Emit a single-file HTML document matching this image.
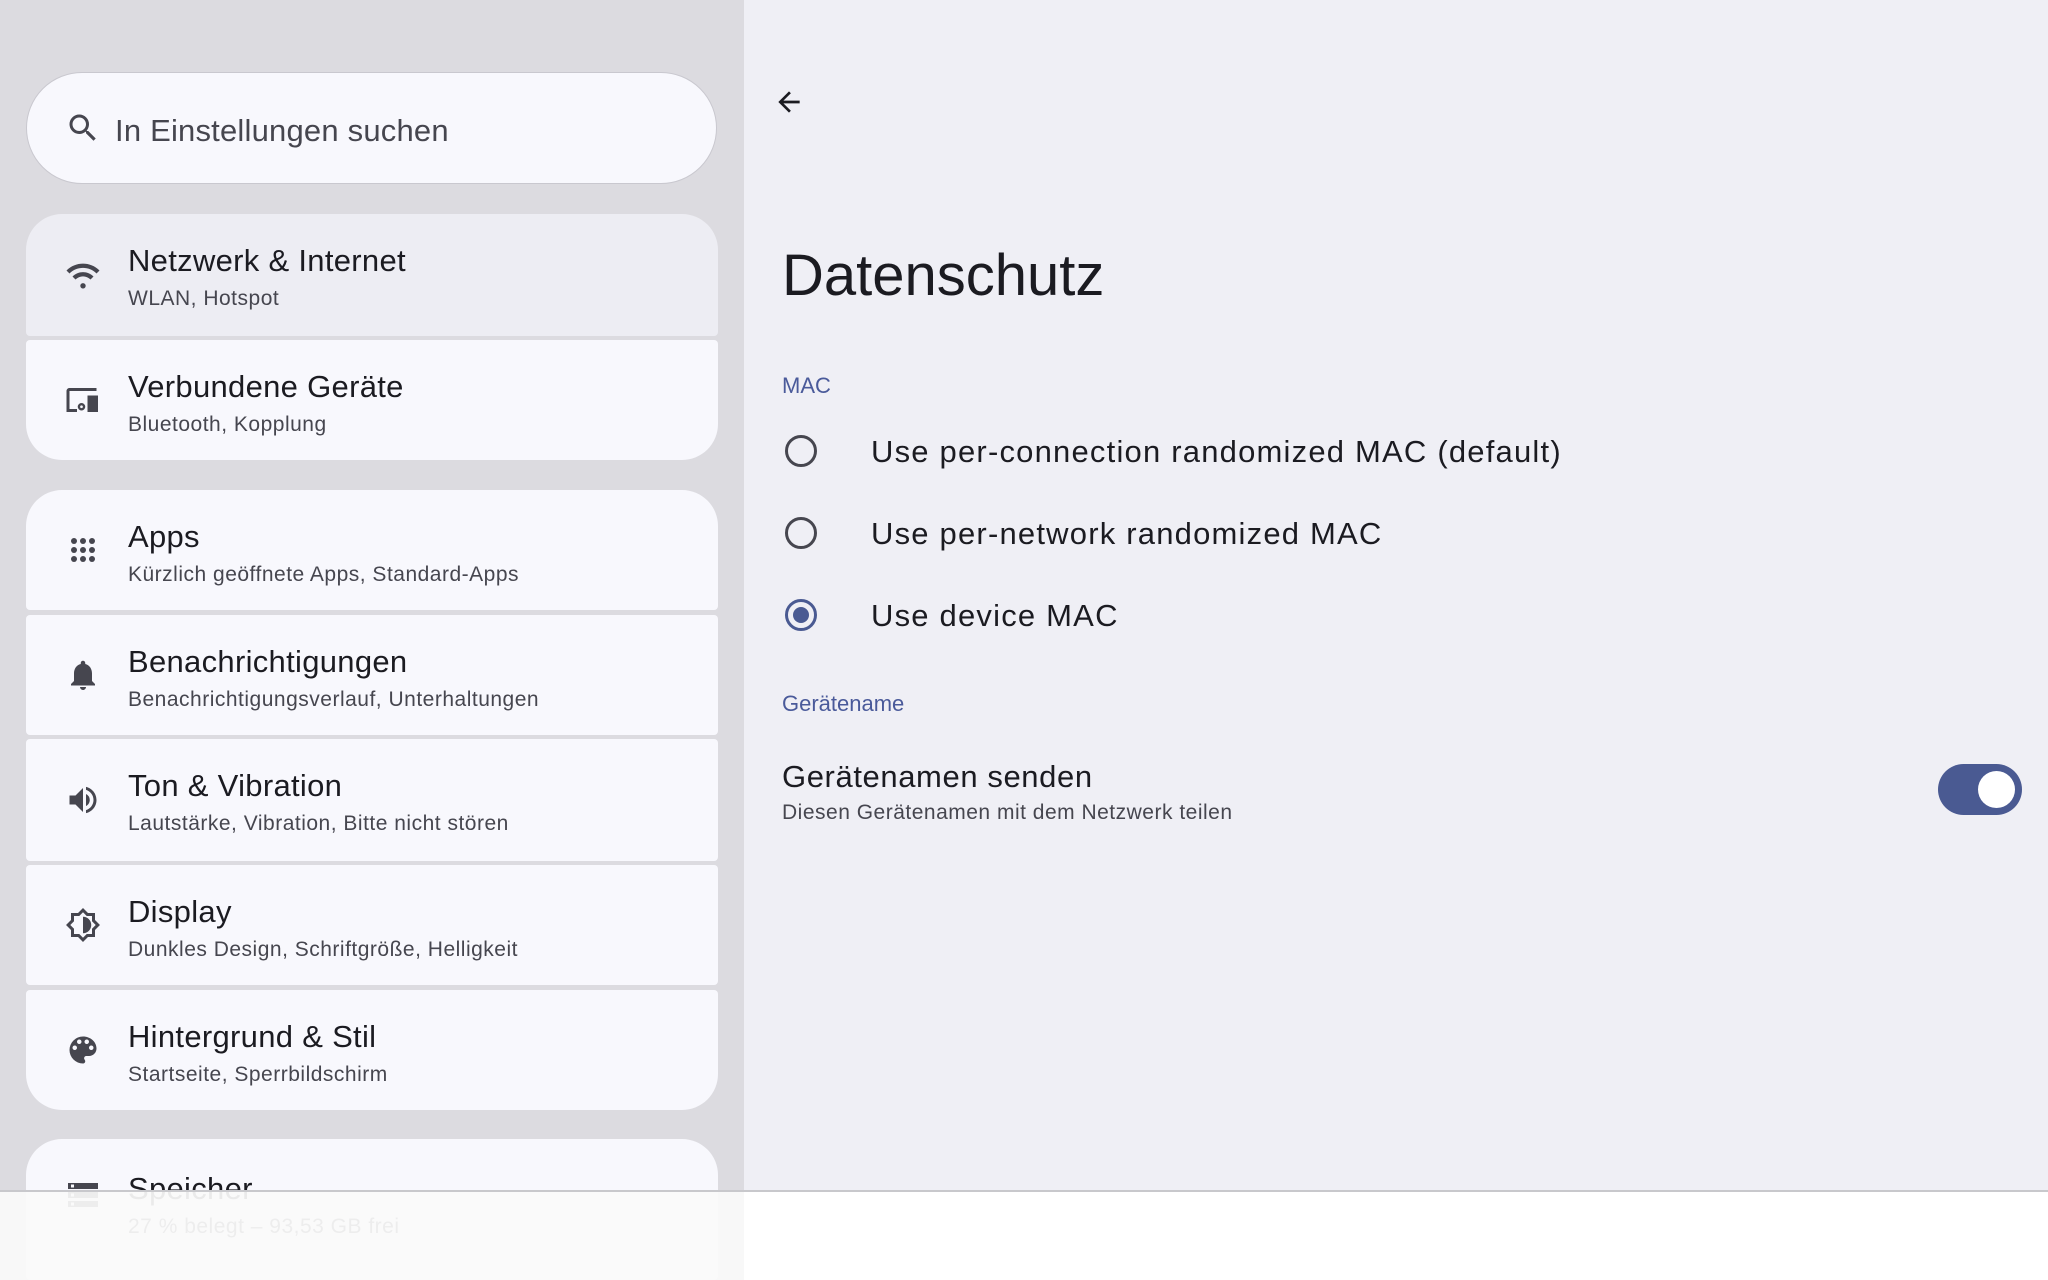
<!DOCTYPE html>
<html><head><meta charset="utf-8"><style>
*{margin:0;padding:0;box-sizing:border-box}
html,body{width:2048px;height:1280px;overflow:hidden}
body{font-family:"Liberation Sans",sans-serif;background:#efeff5;position:relative}
#left{position:absolute;left:0;top:0;width:744px;height:1280px;background:#dcdbe0;overflow:hidden}
.search{position:absolute;left:26px;top:72px;width:691px;height:112px;border-radius:56px;background:#f8f8fd;border:1px solid #c9c8cf}
.search svg{position:absolute;left:38px;top:37px}
.search span{position:absolute;left:88px;top:40px;font-size:31px;color:#46464f;letter-spacing:.2px}
.card{position:absolute;left:26px;width:692px;background:#f8f8fd;border-radius:4px}
.card.sel{background:#ededf3}
.card.t{border-top-left-radius:36px;border-top-right-radius:36px}
.card.b{border-bottom-left-radius:36px;border-bottom-right-radius:36px}
.card svg{position:absolute;left:39px;top:50%;margin-top:-18px}
.card .ti{position:absolute;left:102px;top:29px;font-size:31px;color:#1b1b21;letter-spacing:.3px}
.card .su{position:absolute;left:102px;top:73px;font-size:21px;color:#46464f;letter-spacing:.5px}
#overlay{position:absolute;left:0;top:1190px;width:2048px;height:90px;background:rgba(250,250,250,0.93);border-top:2px solid #c8c8cc}
#overlay .r{position:absolute;left:744px;top:0;right:0;bottom:0;background:#fff}
.rt{position:absolute;color:#1b1b21}
.radio{position:absolute;left:785px;width:32px;height:32px;border-radius:50%;border:3px solid #46464f}
.radio.on{border-color:#4a5a92}
.radio.on::after{content:"";position:absolute;left:5px;top:5px;width:16px;height:16px;border-radius:50%;background:#4a5a92}
.lb{font-size:31px;letter-spacing:1.2px;left:871px}
</style></head><body>
<div id="left">
<div class="search"><svg width="36" height="36" viewBox="0 0 24 24"><path fill="#46464f" d="M15.5 14h-.79l-.28-.27A6.47 6.47 0 0 0 16 9.5 6.5 6.5 0 1 0 9.5 16c1.61 0 3.09-.59 4.23-1.57l.27.28v.79l5 4.99L20.49 19l-4.99-5zm-6 0C7.01 14 5 11.99 5 9.5S7.01 5 9.5 5 14 7.01 14 9.5 11.99 14 9.5 14z"/></svg><span>In Einstellungen suchen</span></div>

<div class="card t sel" style="top:214px;height:122px"><svg width="36" height="36" viewBox="0 0 24 24"><path fill="#46464f" d="M12 21a1.8 1.8 0 1 0 0-3.6 1.8 1.8 0 0 0 0 3.6zM1 9l2 2c4.97-4.97 13.03-4.97 18 0l2-2C16.93 2.93 7.08 2.93 1 9zm4 4l2 2a7.07 7.07 0 0 1 10 0l2-2C15.14 9.14 8.87 9.14 5 13z"/></svg><div class="ti">Netzwerk &amp; Internet</div><div class="su">WLAN, Hotspot</div></div>
<div class="card b" style="top:340px;height:120px"><svg width="36" height="36" viewBox="0 0 24 24"><path fill="#46464f" d="M3 6h18V4H3c-1.1 0-2 .9-2 2v14h7v-2H3V6zM15 9h7v11h-7zM11 14a2.5 2.5 0 1 0 0 5 2.5 2.5 0 0 0 0-5zm0 1.6a.9.9 0 1 1 0 1.8.9.9 0 0 1 0-1.8z"/></svg><div class="ti">Verbundene Geräte</div><div class="su">Bluetooth, Kopplung</div></div>

<div class="card t" style="top:490px;height:120px"><svg width="36" height="36" viewBox="0 0 24 24"><g fill="#46464f"><circle cx="6" cy="6" r="2"/><circle cx="12" cy="6" r="2"/><circle cx="18" cy="6" r="2"/><circle cx="6" cy="12" r="2"/><circle cx="12" cy="12" r="2"/><circle cx="18" cy="12" r="2"/><circle cx="6" cy="18" r="2"/><circle cx="12" cy="18" r="2"/><circle cx="18" cy="18" r="2"/></g></svg><div class="ti">Apps</div><div class="su">Kürzlich geöffnete Apps, Standard-Apps</div></div>
<div class="card" style="top:615px;height:120px"><svg width="36" height="36" viewBox="0 0 24 24"><path fill="#46464f" d="M12 22c1.1 0 2-.9 2-2h-4a2 2 0 0 0 2 2zm6-6v-5c0-3.07-1.64-5.64-4.5-6.32V4c0-.83-.67-1.5-1.5-1.5s-1.5.67-1.5 1.5v.68C7.63 5.36 6 7.92 6 11v5l-2 2v1h16v-1l-2-2z"/></svg><div class="ti">Benachrichtigungen</div><div class="su">Benachrichtigungsverlauf, Unterhaltungen</div></div>
<div class="card" style="top:739px;height:122px"><svg width="36" height="36" viewBox="0 0 24 24"><path fill="#46464f" d="M3 9v6h4l5 5V4L7 9H3zm13.5 3A4.5 4.5 0 0 0 14 7.97v8.05c1.48-.73 2.5-2.25 2.5-4.02zM14 3.23v2.06c2.89.86 5 3.54 5 6.71s-2.11 5.85-5 6.71v2.06c4.01-.91 7-4.490 7-8.77s-2.99-7.86-7-8.77z"/></svg><div class="ti">Ton &amp; Vibration</div><div class="su">Lautstärke, Vibration, Bitte nicht stören</div></div>
<div class="card" style="top:865px;height:120px"><svg width="36" height="36" viewBox="0 0 24 24"><path fill="#46464f" d="M20 8.69V4h-4.69L12 .69 8.69 4H4v4.69L.69 12 4 15.31V20h4.69L12 23.31 15.31 20H20v-4.69L23.31 12 20 8.69zm-2 5.79V18h-3.52L12 20.48 9.52 18H6v-3.52L3.52 12 6 9.52V6h3.52L12 3.52 14.48 6H18v3.52L20.48 12 18 14.48zM12 6.5v11c3.03 0 5.5-2.47 5.5-5.5S15.03 6.5 12 6.5z"/></svg><div class="ti">Display</div><div class="su">Dunkles Design, Schriftgröße, Helligkeit</div></div>
<div class="card b" style="top:990px;height:120px"><svg width="36" height="36" viewBox="0 0 24 24"><path fill="#46464f" d="M12 3a9 9 0 0 0 0 18c.83 0 1.5-.67 1.5-1.5 0-.39-.15-.74-.39-1.01-.23-.26-.38-.61-.38-.99 0-.83.67-1.5 1.5-1.5H16c2.76 0 5-2.240 5-5 0-4.42-4.03-8-9-8zm-5.5 9a1.5 1.5 0 1 1 0-3 1.5 1.5 0 0 1 0 3zm3-4a1.5 1.5 0 1 1 0-3 1.5 1.5 0 0 1 0 3zm5 0a1.5 1.5 0 1 1 0-3 1.5 1.5 0 0 1 0 3zm3 4a1.5 1.5 0 1 1 0-3 1.5 1.5 0 0 1 0 3z"/></svg><div class="ti">Hintergrund &amp; Stil</div><div class="su">Startseite, Sperrbildschirm</div></div>
<div class="card t" style="top:1139px;height:141px"><svg width="36" height="36" viewBox="0 0 24 24" style="top:38px;margin-top:0"><path fill="#46464f" d="M2 20h20v-4H2v4zm2-3h2v2H4v-2zM2 4v4h20V4H2zm4 3H4V5h2v2zm-4 7h20v-4H2v4zm2-3h2v2H4v-2z"/></svg><div class="ti" style="top:32px">Speicher</div><div class="su" style="top:76px">27 % belegt – 93,53 GB frei</div></div>
</div>

<svg style="position:absolute;left:773px;top:86px" width="32" height="32" viewBox="0 0 24 24"><path fill="#1b1b21" d="M20 11H7.83l5.59-5.59L12 4l-8 8 8 8 1.41-1.41L7.83 13H20v-2z"/></svg>
<div class="rt" style="left:782px;top:242px;font-size:58px">Datenschutz</div>
<div class="rt" style="left:782px;top:373px;font-size:22px;color:#4a5a9a">MAC</div>
<div class="radio" style="top:435px"></div><div class="rt lb" style="top:434px">Use per-connection randomized MAC (default)</div>
<div class="radio" style="top:517px"></div><div class="rt lb" style="top:516px">Use per-network randomized MAC</div>
<div class="radio on" style="top:599px"></div><div class="rt lb" style="top:598px">Use device MAC</div>
<div class="rt" style="left:782px;top:691px;font-size:22px;color:#4a5a9a">Gerätename</div>
<div class="rt" style="left:782px;top:759px;font-size:31px;letter-spacing:.6px">Gerätenamen senden</div>
<div class="rt" style="left:782px;top:801px;font-size:21px;color:#46464f;letter-spacing:.5px">Diesen Gerätenamen mit dem Netzwerk teilen</div>
<div style="position:absolute;left:1938px;top:764px;width:84px;height:51px;border-radius:26px;background:#4a5a92"><div style="position:absolute;right:7px;top:7px;width:37px;height:37px;border-radius:50%;background:#fff"></div></div>

<div id="overlay"><div class="r"></div></div>
</body></html>
